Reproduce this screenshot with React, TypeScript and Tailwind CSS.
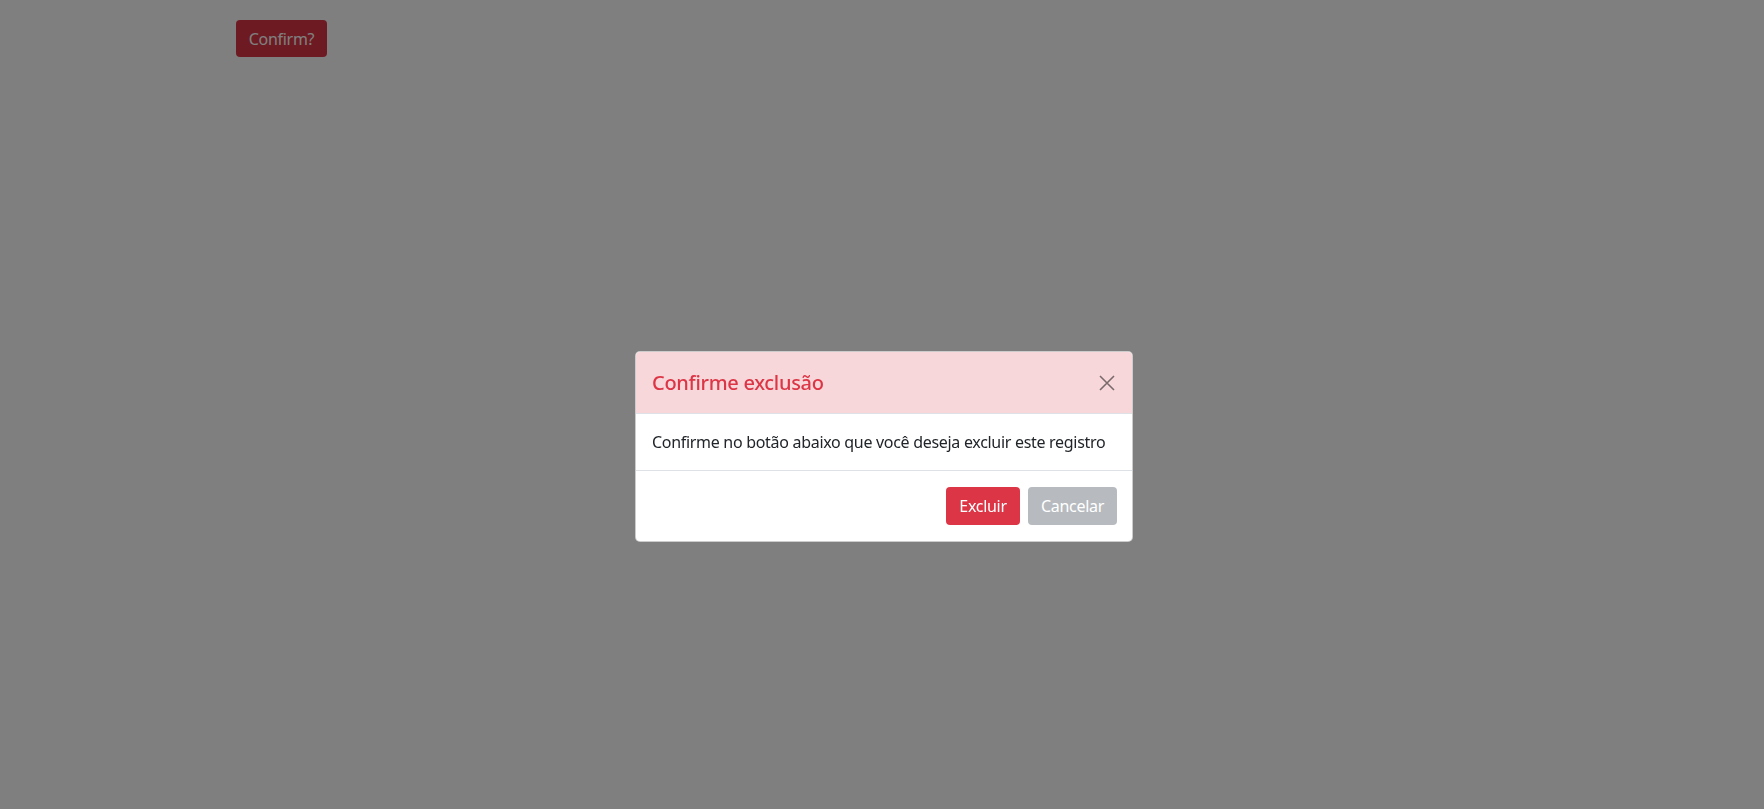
import { useState } from "react";

const font = { fontFamily: '"Noto Sans", "Open Sans", sans-serif' };

function CloseIcon() {
  return (
    <svg width="16" height="16" viewBox="0 0 16 16" fill="none">
      <path d="M1 1L15 15M15 1L1 15" stroke="#000" strokeWidth="1.6" />
    </svg>
  );
}

export default function App() {
  const [isOpen, setIsOpen] = useState(true);

  return (
    <div className="min-h-screen bg-white tracking-[-0.3px]" style={font}>
      <div className="pt-5 pl-[236px]">
        <button
          onClick={() => setIsOpen(true)}
          className="h-[37px] w-[91px] rounded-[4px] bg-[#dc3545] text-base leading-6 text-white"
        >
          Confirm?
        </button>
      </div>

      {isOpen && (
        <div className="fixed inset-0 bg-black/50">
          {/* modal dialog */}
          <div className="absolute left-[635px] top-[351px] w-[498px] overflow-hidden rounded-[5px] border border-black/20 bg-white">
            <div className="flex h-[62px] items-center justify-between border-b border-[#dee2e6] bg-[#f8d7da] px-4">
              <h5 className="text-[20px] font-medium leading-[30px] text-[#dc3545]">
                Confirme exclusão
              </h5>
              <button onClick={() => setIsOpen(false)} className="mr-[1px] opacity-50">
                <CloseIcon />
              </button>
            </div>
            <div className="whitespace-nowrap p-4 text-base leading-6 text-[#212529]">
              Confirme no botão abaixo que você deseja excluir este registro
            </div>
            <div className="flex justify-end gap-2 border-t border-[#dee2e6] px-[15px] py-4">
              <button className="h-[38px] w-[74px] rounded-[4px] bg-[#dc3545] text-base text-white">
                Excluir
              </button>
              <button
                disabled
                className="h-[38px] w-[89px] rounded-[4px] bg-[#6c757d] text-base text-white opacity-[0.49]"
              >
                Cancelar
              </button>
            </div>
          </div>
        </div>
      )}
    </div>
  );
}
